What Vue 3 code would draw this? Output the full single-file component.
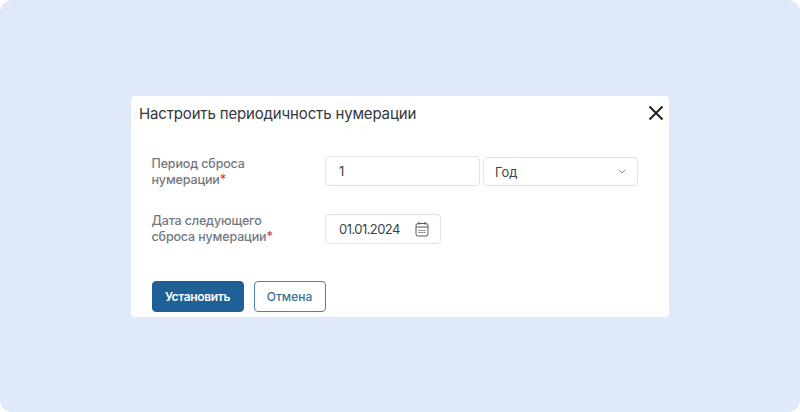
<script setup>
const period = '1'
</script>

<template>
  <div class="page">
    <section class="dialog">
      <header class="head">
        <h1 class="title">Настроить периодичность нумерации</h1>
        <svg class="close" width="16" height="16" viewBox="0 0 16 16" fill="none" stroke="#1d1f23" stroke-width="1.9">
          <path d="M1.5 1.5 14.5 14.5M14.5 1.5 1.5 14.5" />
        </svg>
      </header>
      <div class="row first">
        <label class="label">Период сброса<br />нумерации<span class="req">*</span></label>
        <div class="field num">{{ period }}</div>
        <div class="field select">
          <span>Год</span>
          <svg width="8" height="5" viewBox="0 0 8 5" fill="none" stroke="#85898f" stroke-width="1">
            <path d="M.7.7 4 4 7.3.7" />
          </svg>
        </div>
      </div>
      <div class="row second">
        <label class="label">Дата следующего<br />сброса нумерации<span class="req">*</span></label>
        <div class="field date">
          <span class="date-text">01.01.2024</span>
          <svg width="14" height="16" viewBox="0 0 14 16" fill="none" stroke="#54585d" stroke-width="1">
            <rect x="1" y="2.5" width="12" height="12.5" rx="2" />
            <path d="M1 6h12M4 .8v3M10 .8v3" />
            <path d="M3.5 9.5h7M3.5 11.5h7" stroke-dasharray="1.2 .7" />
          </svg>
        </div>
      </div>
      <footer class="actions">
        <button class="btn primary">Установить</button>
        <button class="btn ghost">Отмена</button>
      </footer>
    </section>
  </div>
</template>

<style>
body { background: #fff; }
</style>

<style scoped>
.page {
  width: 800px;
  height: 412px;
  background: #e0e9f9;
  border-radius: 12px;
  display: flex;
  align-items: flex-start;
  justify-content: center;
  padding-top: 96px;
  box-sizing: border-box;
  font-family: Inter, "Noto Sans", sans-serif;
}
.dialog {
  width: 538px;
  height: 221px;
  background: #fff;
  border-radius: 4px;
  box-sizing: border-box;
  padding: 0 20.5px;
  display: flex;
  flex-direction: column;
}
.head {
  display: flex;
  align-items: center;
  justify-content: space-between;
  margin: 0 -15.5px 0 -12.5px;
  height: 34px;
}
.title {
  margin: 0;
  font-size: 15px;
  font-weight: 400;
  color: #33363b;
  letter-spacing: -0.15px;
}
.close { flex: none; }
.row { display: flex; align-items: flex-start; }
.first { margin-top: 26px; }
.second { margin-top: 26px; }
.second .label { margin-top: -1px; }
.label {
  width: 173.5px;
  flex: none;
  font-size: 12.5px;
  line-height: 16px;
  color: #74787e;
  font-weight: 500;
  letter-spacing: -0.15px;
}
.req { color: #d33a3a; }
.field {
  box-sizing: border-box;
  height: 30px;
  background: #fff;
  border: 1px solid #e0e2e6;
  border-radius: 4px;
  font-size: 13px;
  color: #3f4247;
  display: flex;
  align-items: center;
}
.num { width: 155px; padding-left: 13px; }
.select {
  width: 155px;
  height: 29px;
  margin-left: 3px;
  margin-top: 1px;
  padding: 0 11px;
  justify-content: space-between;
}
.date {
  width: 116px;
  padding: 0 11px 0 13px;
  justify-content: space-between;
}
.date-text { letter-spacing: -0.55px; }
.actions { display: flex; gap: 10px; margin-top: 36px; }
.btn {
  box-sizing: border-box;
  height: 31px;
  border-radius: 4px;
  font: 500 12px Inter, "Noto Sans", sans-serif;
  padding: 0;
}
.primary {
  width: 92px;
  background: #1f6196;
  border: 1px solid #1f6196;
  color: #fff;
  font-weight: 600;
  letter-spacing: -0.35px;
}
.ghost {
  width: 72px;
  background: #fff;
  border: 1px solid #4a82aa;
  color: #3a6f98;
}
</style>
